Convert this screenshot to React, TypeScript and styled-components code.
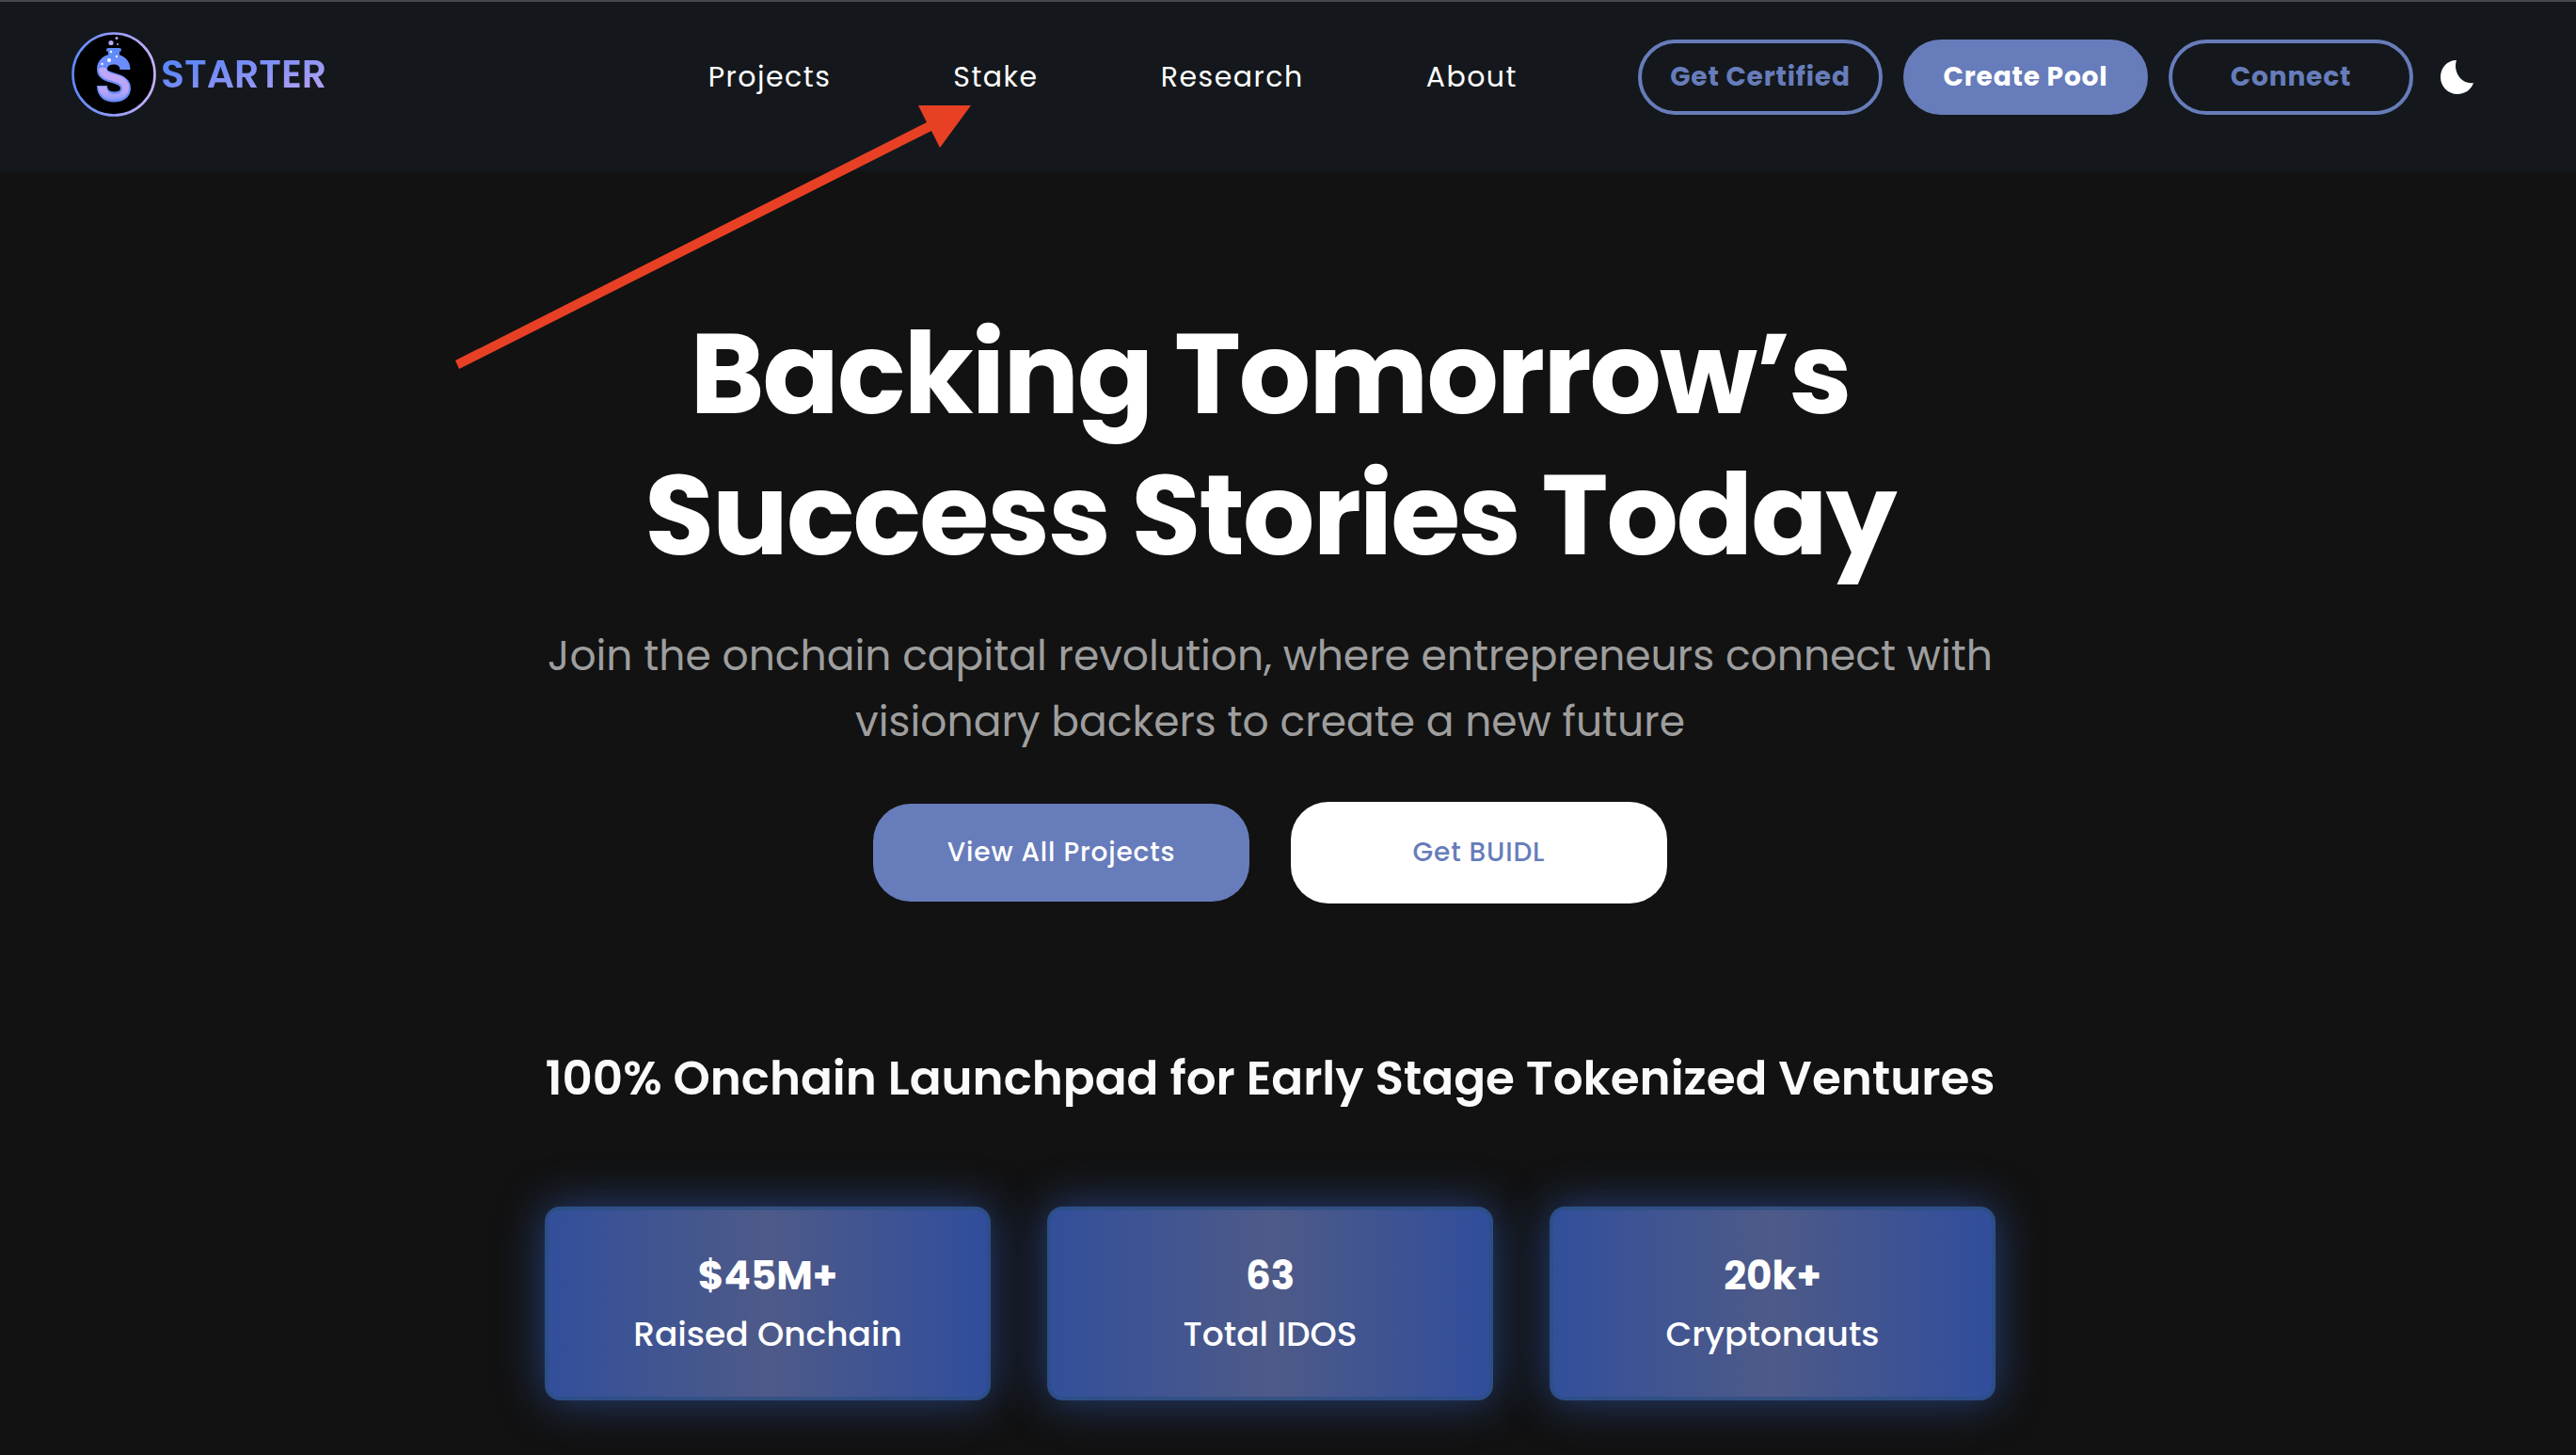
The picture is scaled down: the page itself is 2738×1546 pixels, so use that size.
import React from 'react';
import styled, { createGlobalStyle, css } from 'styled-components';

const GlobalStyle = createGlobalStyle`
  *, *::before, *::after { box-sizing: border-box; }
  body {
    margin: 0;
    background: #121212;
    color: #fff;
    font-family: Poppins, Inter, 'Open Sans', sans-serif;
    -webkit-font-smoothing: antialiased;
  }
`;

const Page = styled.div`
  position: relative;
  min-height: 100vh;
  overflow: hidden;
`;

const Header = styled.header`
  display: grid;
  grid-template-columns: 1fr auto auto;
  column-gap: 128px;
  align-items: start;
  padding: 32px 104px 58px 76px;
  border-top: 2px solid #47484a;
  background: #14181c;
`;

const Brand = styled.a`
  display: flex;
  align-items: center;
  justify-self: start;
  gap: 5px;
  color: inherit;
  text-decoration: none;
`;

const BrandName = styled.span`
  font-size: 41px;
  font-weight: 600;
  line-height: 48px;
  color: transparent;
  background: linear-gradient(160deg, #5f86f8 20%, #b3a0f3 90%);
  background-clip: text;
`;

const Nav = styled.nav`
  display: flex;
  gap: 130px;
  padding-top: 30px;
`;

const NavLink = styled.a`
  color: #fff;
  font-size: 30px;
  line-height: 36px;
  letter-spacing: 0.05em;
  text-decoration: none;
`;

const Actions = styled.div`
  display: flex;
  justify-content: flex-end;
  align-items: center;
  gap: 22px;
  padding-top: 8px;
`;

const PillButton = styled.button<{ $filled?: boolean }>`
  width: 260px;
  height: 80px;
  padding: 0;
  border: 4px solid #677cba;
  border-radius: 40px;
  background: ${(p) => (p.$filled ? '#677cba' : 'transparent')};
  color: ${(p) => (p.$filled ? '#fff' : '#677cba')};
  font: inherit;
  font-size: 28px;
  font-weight: 700;
  letter-spacing: 0.03em;
  white-space: nowrap;
`;

const ThemeButton = styled.button`
  display: flex;
  padding: 0 4px 0 7px;
  border: 0;
  background: none;
`;

const Main = styled.main`
  display: flex;
  flex-direction: column;
  align-items: center;
  padding: 140px 38px 56px 0;
  text-align: center;
`;

const Title = styled.h1`
  margin: 0;
  font-size: 120px;
  font-weight: 700;
  line-height: 150px;
  letter-spacing: -2px;
`;

const Line = styled.span`
  display: block;
`;

const Subtitle = styled.p`
  margin: 40px 0 0;
  color: #9e9e9e;
  font-size: 44px;
  line-height: 70px;
`;

const CallToActions = styled.div`
  display: flex;
  align-items: center;
  gap: 44px;
  margin-top: 50px;
`;

const CtaButton = styled.button<{ $light?: boolean }>`
  width: 400px;
  height: 104px;
  border: 0;
  border-radius: 40px;
  background: #677cba;
  color: #fff;
  font: inherit;
  font-size: 28px;
  font-weight: 500;
  letter-spacing: 0.03em;
  ${(p) => p.$light && css`
    height: 108px;
    background: #fff;
    color: #677cba;
  `}
`;

const Tagline = styled.h2`
  margin: 150px 0 0;
  color: #fafafa;
  font-size: 50px;
  font-weight: 600;
  line-height: 72px;
`;

const Stats = styled.dl`
  display: grid;
  grid-template-columns: repeat(3, 1fr);
  gap: 60px;
  width: 100%;
  max-width: 1542px;
  margin: 100px 0 0;
`;

const StatCard = styled.div`
  display: flex;
  flex-direction: column-reverse;
  padding: 38px 20px 36px;
  border: 4px solid rgba(43, 79, 128, 0.7);
  border-radius: 16px;
  background: linear-gradient(90deg, #324f9b, #4e5a88 50%, #304d9c) border-box;
  box-shadow: 0 0 48px rgba(50, 90, 180, 0.65);
`;

const StatLabel = styled.dt`
  font-size: 36px;
  font-weight: 500;
  line-height: 60px;
`;

const StatValue = styled.dd`
  margin: 0;
  font-size: 42px;
  font-weight: 700;
  line-height: 64px;
`;

const Pointer = styled.svg`
  position: absolute;
  top: 110px;
  left: 482px;
  pointer-events: none;
`;

const FlaskLogo = () => (
  <svg width="90" height="90" viewBox="0 0 90 90" aria-hidden="true">
    <defs>
      <linearGradient id="ring" x1="0" x2="1" y1="0" y2="0">
        <stop offset="0" stopColor="#6088fa" />
        <stop offset="1" stopColor="#c5b1fb" />
      </linearGradient>
      <linearGradient id="liquid" gradientUnits="userSpaceOnUse" x1="0" x2="0" y1="38" y2="74">
        <stop offset="0" stopColor="#c0a8fa" />
        <stop offset="0.7" stopColor="#b9a4fa" />
        <stop offset="1" stopColor="#7f95fa" />
      </linearGradient>
    </defs>
    <circle cx="45" cy="45" r="43.500" fill="#000" stroke="url(#ring)" strokeWidth="2.600" />
    <path d="M57 40C57 33 52 29 45 29C37 29 32.500 33 32.500 39.500C32.500 45 37 47 45 49C53 51 57.500 54 57.500 60C57.500 66 52 69 45 69C37 69 32.500 65 32.500 57" fill="none" stroke="#6a8dfa" strokeWidth="11" />
    <path d="M37 19Q37 17 39 17H51Q53 17 53 19T51 21V28H39V21Q37 21 37 19Z" fill="#5f8af9" />
    <path d="M29 39Q34 36 37 39C37 43 43 44 50 46C59 49 62 55 61 61C60 68 54 72 45 72C36 72 30 68 28 58H37C38 64 41 66 46 66C51 66 54 63 54 60C54 54 46 53 40 51C33 49 29 46 29 39Z" fill="url(#liquid)" />
    <circle cx="42" cy="11.500" r="2.600" fill="#bda6f8" />
    <circle cx="48" cy="6.500" r="1.500" fill="#bda6f8" />
    <circle cx="49" cy="13" r="1" fill="#bda6f8" />
    <circle cx="42" cy="21" r="1.200" fill="#fff" />
    <circle cx="48" cy="26" r="1.200" fill="#fff" />
    <circle cx="40" cy="30" r="2" fill="#fff" />
    <circle cx="32.500" cy="34" r="1.200" fill="#fff" />
  </svg>
);

const NAV_ITEMS = ['Projects', 'Stake', 'Research', 'About'];
const STATS = [
  { value: '$45M+', label: 'Raised Onchain' },
  { value: '63', label: 'Total IDOS' },
  { value: '20k+', label: 'Cryptonauts' },
];

export default function App() {
  return (
    <Page>
      <GlobalStyle />
      <Header>
        <Brand href="#">
          <FlaskLogo />
          <BrandName>STARTER</BrandName>
        </Brand>
        <Nav>
          {NAV_ITEMS.map((item) => (
            <NavLink key={item} href="#">{item}</NavLink>
          ))}
        </Nav>
        <Actions>
          <PillButton>Get Certified</PillButton>
          <PillButton $filled>Create Pool</PillButton>
          <PillButton>Connect</PillButton>
          <ThemeButton aria-label="Toggle theme">
            <svg width="36" height="36" viewBox="0 0 36 36" aria-hidden="true">
              <path d="M17 0C13 12 22 26 35 24C33 31 26 36 18 36C8 36 0 28 0 18C0 8 7 0 17 0Z" fill="#fff" />
            </svg>
          </ThemeButton>
        </Actions>
      </Header>
      <Main>
        <Title>
          <Line>Backing Tomorrow’s</Line>
          <Line>Success Stories Today</Line>
        </Title>
        <Subtitle>
          <Line>Join the onchain capital revolution, where entrepreneurs connect with</Line>
          <Line>visionary backers to create a new future</Line>
        </Subtitle>
        <CallToActions>
          <CtaButton>View All Projects</CtaButton>
          <CtaButton $light>Get BUIDL</CtaButton>
        </CallToActions>
        <Tagline>100% Onchain Launchpad for Early Stage Tokenized Ventures</Tagline>
        <Stats>
          {STATS.map((stat) => (
            <StatCard key={stat.label}>
              <StatLabel>{stat.label}</StatLabel>
              <StatValue>{stat.value}</StatValue>
            </StatCard>
          ))}
        </Stats>
      </Main>
      <Pointer width="552" height="284" viewBox="0 0 552 284" aria-hidden="true">
        <path d="M2 273L503 20L494 2H550L517 47L508 29L6 282Z" fill="#e84025" />
      </Pointer>
    </Page>
  );
}
